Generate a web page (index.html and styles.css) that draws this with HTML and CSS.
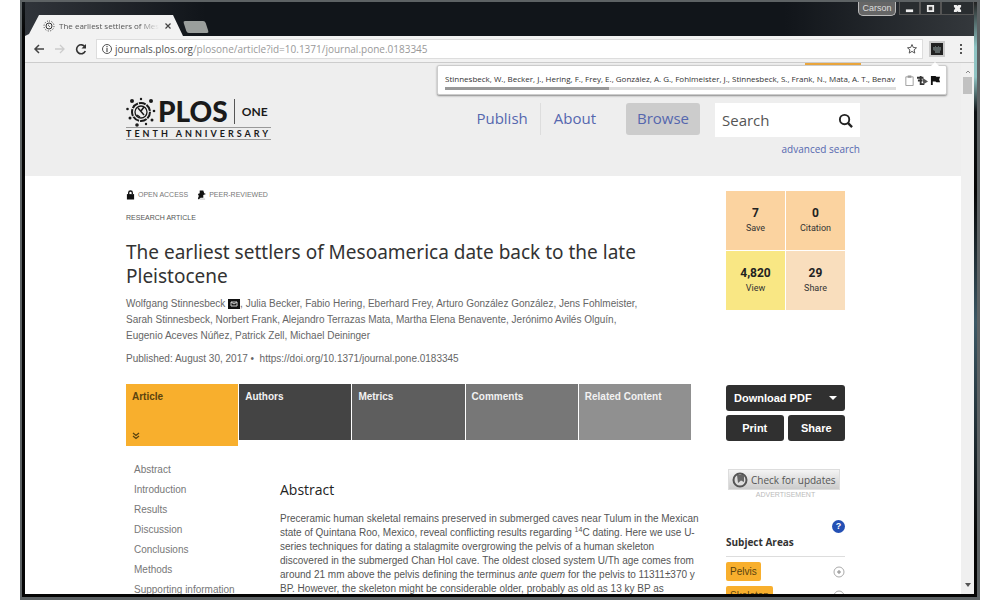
FILE: index.html
```html
<!DOCTYPE html>
<html lang="en">
<head>
<meta charset="utf-8">
<title>The earliest settlers of Mesoamerica</title>
<link rel="stylesheet" href="styles.css">
</head>
<body>
<div class="window">
  <div class="titlebar">
    <div class="tabs">
      <div class="tab">
        <svg class="favicon" viewBox="0 0 12 12"><g fill="none" stroke="#333"><circle cx="6" cy="6" r="3"/><path stroke-dasharray="1 1.6" d="M6 1a5 5 0 1 1 0 10a5 5 0 1 1 0-10M5 5l2 1-1 1"/></g></svg>
        <span class="tab-title">The earliest settlers of Mes</span>
        <button class="tab-close" aria-label="Close tab"><svg viewBox="0 0 8 8"><path d="M1.500 1.500l5 5M6.500 1.500l-5 5" stroke="#444" stroke-width="1.200"/></svg></button>
      </div>
      <button class="new-tab" aria-label="New tab"></button>
    </div>
    <div class="controls">
      <button class="user">Carson</button>
      <button class="control" aria-label="Minimize"><svg viewBox="0 0 10 10"><path d="M1 6h8v3H1z" fill="#eee"/></svg></button>
      <button class="control" aria-label="Maximize"><svg viewBox="0 0 10 10"><path d="M2 2h6v6H2z" fill="#444" stroke="#eee" stroke-width="2"/></svg></button>
      <button class="control close" aria-label="Close"><svg viewBox="0 0 10 10"><path d="M1 1h3l1 1 1-1h3v2L7.500 5 9 7v2H6L5 8 4 9H1V7l1.500-2L1 3z" fill="#eee"/></svg></button>
    </div>
  </div>

  <div class="toolbar">
    <button class="nav-button" aria-label="Back"><svg viewBox="0 0 12 12"><path d="M11 6H2M6 2L2 6l4 4" fill="none" stroke="#444" stroke-width="1.500"/></svg></button>
    <button class="nav-button" aria-label="Forward"><svg viewBox="0 0 12 12"><path d="M1 6h9M6 2l4 4-4 4" fill="none" stroke="#ccc" stroke-width="1.300"/></svg></button>
    <button class="nav-button" aria-label="Reload"><svg viewBox="0 0 12 12"><path d="M10 4A4.500 4.500 0 1 0 10.300 8" fill="none" stroke="#333" stroke-width="1.600"/><path d="M11 1v4.500H6.500z" fill="#333"/></svg></button>
    <div class="address">
      <svg class="info" viewBox="0 0 12 12"><circle cx="6" cy="6" r="4.500" fill="none" stroke="#555"/><path d="M6 5v4M6 3v1.200" stroke="#555" stroke-width="1.200"/></svg>
      <span class="url"><b>journals.plos.org</b>/plosone/article?id=10.1371/journal.pone.0183345</span>
      <button class="star" aria-label="Bookmark"><svg viewBox="0 0 12 12"><path d="M6 1.500l1.300 3 3.200.3-2.400 2.100.7 3.200L6 8.400l-2.800 1.700.7-3.200-2.400-2.100 3.200-.3z" fill="none" stroke="#555"/></svg></button>
    </div>
    <div class="extension">
      <button class="extension-button" aria-label="Citation helper"><svg viewBox="0 0 12 12"><path d="M0 0h12v12H0z" fill="#222"/><path d="M2 4h2V3h1v1h2V3h1v1h2v3L9 8v2H4V8L2 7z" fill="#5c6464"/></svg></button>
      <div class="bubble">
        <div class="citation">
          <div class="citation-text">Stinnesbeck, W., Becker, J., Hering, F., Frey, E., González, A. G., Fohlmeister, J., Stinnesbeck, S., Frank, N., Mata, A. T., Benav</div>
          <div class="track"><div class="thumb"></div></div>
        </div>
        <button class="tool" aria-label="Copy"><svg viewBox="0 0 12 12"><path d="M2 2h8v9.500H2z" fill="#fff" stroke="#999"/><path d="M4 .5h4V3H4z" fill="#999"/></svg></button>
        <button class="tool" aria-label="Share"><svg viewBox="0 0 12 12"><path d="M0 2h7v2H0zM1 5h5v2H1zM3 1h2v8h3v2H3z" fill="#333"/><path d="M6 3l6 4-5 3z" fill="#555"/></svg></button>
        <button class="tool" aria-label="Flag"><svg viewBox="0 0 12 12"><path d="M1 1h2v10H1zM3 1h3l1 1h4l-1 3 1 3H7L6 7H3z" fill="#111"/></svg></button>
      </div>
    </div>
    <button class="menu" aria-label="Menu"><svg viewBox="0 0 12 12"><path d="M5 1h2v2H5zM5 5h2v2H5zM5 9h2v2H5z" fill="#555"/></svg></button>
  </div>

  <div class="viewport">
    <div class="page">
      <header class="site-header">
        <div class="container header-row">
          <a class="logo" href="#">
            <span class="logo-top">
              <svg class="burst" viewBox="0 0 30 30"><g fill="none" stroke="#1a1a1a"><circle cx="15" cy="15" r="9" stroke-width="2" stroke-dasharray="7 1"/><circle cx="15" cy="15" r="6" stroke-width="1.300"/><path d="M12 11l6 7M18 10l-3 4M11 18l3 2" stroke-width="1.500"/></g><g fill="#1a1a1a"><circle cx="6" cy="4" r="2"/><circle cx="15" cy="2" r="1.200"/><circle cx="25" cy="4" r="2"/><circle cx="1.500" cy="12" r="1.300"/><circle cx="28" cy="14" r="1.300"/><circle cx="4" cy="21" r="1.500"/><circle cx="26" cy="23" r="1.500"/><circle cx="11" cy="28" r="1.800"/><circle cx="20" cy="27" r="1.200"/></g></svg>
              <span class="plos">PLOS</span><span class="one">ONE</span>
            </span>
            <span class="tenth">TENTH ANNIVERSARY</span>
          </a>
          <nav class="site-nav">
            <a href="#">Publish</a>
            <a class="about" href="#">About</a>
            <a class="browse" href="#">Browse</a>
          </nav>
          <form class="search">
            <div class="search-box">
              <input type="search" placeholder="Search" aria-label="Search">
              <button class="search-button" type="button" aria-label="Submit search"><svg viewBox="0 0 16 16"><circle cx="7" cy="7" r="5" fill="none" stroke="#222" stroke-width="2"/><path d="M10.500 10.500L15 15" stroke="#222" stroke-width="2.500"/></svg></button>
            </div>
            <a class="advanced" href="#">advanced search</a>
          </form>
        </div>
      </header>

      <div class="container columns">
        <main class="article">
          <div class="badges">
            <svg viewBox="0 0 10 10"><path d="M1 4h8v6H1z" fill="#111"/><path d="M3 5V2.500a2 2 0 0 1 4 0V4" fill="none" stroke="#111" stroke-width="1.500"/></svg>
            <span class="open">OPEN ACCESS</span>
            <svg viewBox="0 0 10 10"><path d="M3 0h4l1 3 2 1-3 1v3H4L2 10 1 9l1-3-1-2 2-1z" fill="#111"/><path d="M3 9.500h6" stroke="#bbb"/></svg>
            <span>PEER-REVIEWED</span>
          </div>
          <div class="kind">RESEARCH ARTICLE</div>
          <h1>The earliest settlers of Mesoamerica date back to the late Pleistocene</h1>
          <p class="authors">Wolfgang Stinnesbeck <svg class="mail" viewBox="0 0 12 10"><path d="M0 0h12v10H0z" fill="#111"/><path d="M3 3h6v4H3zM3 3l3 2 3-2" fill="none" stroke="#ccc"/></svg>, Julia Becker, Fabio Hering, Eberhard Frey, Arturo González González, Jens Fohlmeister,<br>Sarah Stinnesbeck, Norbert Frank, Alejandro Terrazas Mata, Martha Elena Benavente, Jerónimo Avilés Olguín,<br>Eugenio Aceves Núñez, Patrick Zell, Michael Deininger</p>
          <p class="published">Published: August 30, 2017 • &nbsp;<a href="#">https://doi.org/10.1371/journal.pone.0183345</a></p>
          <nav class="article-tabs">
            <a class="current" href="#">Article<svg viewBox="0 0 8 8"><path d="M1 1l3 2.500L7 1M1 4l3 2.500L7 4" fill="none" stroke="#5b430f" stroke-width="1.300"/></svg></a>
            <a class="t-authors" href="#">Authors</a>
            <a class="t-metrics" href="#">Metrics</a>
            <a class="t-comments" href="#">Comments</a>
            <a class="t-related" href="#">Related Content</a>
          </nav>
          <div class="body-row">
            <nav class="toc">
              <a href="#">Abstract</a>
              <a href="#">Introduction</a>
              <a href="#">Results</a>
              <a href="#">Discussion</a>
              <a href="#">Conclusions</a>
              <a href="#">Methods</a>
              <a href="#">Supporting information</a>
            </nav>
            <section class="abstract">
              <h2>Abstract</h2>
              <p>Preceramic human skeletal remains preserved in submerged caves near Tulum in the Mexican<br>state of Quintana Roo, Mexico, reveal conflicting results regarding <sup>14</sup>C dating. Here we use U-<br>series techniques for dating a stalagmite overgrowing the pelvis of a human skeleton<br>discovered in the submerged Chan Hol cave. The oldest closed system U/Th age comes from<br>around 21 mm above the pelvis defining the terminus <i>ante quem</i> for the pelvis to 11311±370 y<br>BP. However, the skeleton might be considerable older, probably as old as 13 ky BP as</p>
            </section>
          </div>
        </main>

        <aside class="sidebar">
          <div class="metrics">
            <a href="#"><b>7</b>Save</a>
            <a href="#"><b>0</b>Citation</a>
            <a class="view" href="#"><b>4,820</b>View</a>
            <a class="share" href="#"><b>29</b>Share</a>
          </div>
          <div class="actions">
            <button class="download">Download PDF <svg viewBox="0 0 8 4"><path d="M0 0h8L4 4z" fill="#fff"/></svg></button>
            <button>Print</button>
            <button>Share</button>
          </div>
          <button class="updates"><svg viewBox="0 0 16 16"><circle cx="8" cy="8" r="6.500" fill="#ddd" stroke="#555" stroke-width="2"/><path d="M5 3h7v7l-3-1.500L6 11z" fill="#666"/></svg>Check for updates</button>
          <div class="ad">ADVERTISEMENT</div>
          <button class="help" aria-label="Help">?</button>
          <h3>Subject Areas</h3>
          <ul class="subjects">
            <li><a href="#">Pelvis</a><svg viewBox="0 0 12 12"><circle cx="6" cy="6" r="5" fill="none" stroke="#aaa"/><path d="M6 4v4M4 6h4" stroke="#888"/></svg></li>
            <li><a href="#">Skeleton</a><svg viewBox="0 0 12 12"><circle cx="6" cy="6" r="5" fill="none" stroke="#aaa"/><path d="M6 4v4M4 6h4" stroke="#888"/></svg></li>
          </ul>
        </aside>
      </div>
    </div>
    <div class="scrollbar">
      <svg viewBox="0 0 8 8"><path d="M2 5l2-2 2 2" fill="none" stroke="#888"/></svg>
      <div class="scroll-thumb"></div>
      <svg class="down" viewBox="0 0 8 8"><path d="M1 2h6L4 6z" fill="#555"/></svg>
    </div>
  </div>
</div>
</body>
</html>
```
FILE: styles.css
```css
* { box-sizing: border-box; }
body { margin: 0; padding: 0 20px; background: #fff; font: 10px/14px "Liberation Sans", sans-serif; color: #666; }
a { color: inherit; text-decoration: none; }
button { margin: 0; padding: 0; border: 0; background: none; color: inherit; font: inherit; }
svg { display: block; flex: none; }
h1, h2, h3, p, ul { margin: 0; padding: 0; font-weight: normal; }

.window { display: flex; flex-direction: column; height: 100vh; overflow: hidden; padding: 0 3px 3px; border: solid #5d6264; border-width: 2px 3px 3px 2px; background: linear-gradient(#111519, #050505 30px) no-repeat 0 0 / 50% 100%, linear-gradient(#222, #8fc4c4 45px, #8fc4c4 75px, #0c1013 110px, #050505 190px, #3c5966 320px, #050505 90%); }

/* Browser frame */
.titlebar { display: flex; flex: none; justify-content: space-between; height: 34px; background: linear-gradient(90deg, #30343a, #11151a 180px, #11151a 80%, #34383c); }
.tabs { display: flex; align-items: flex-end; }
.tab { display: flex; align-items: center; width: 160px; height: 21px; padding: 0 12px 0 18px; background: #f2f2f2; clip-path: polygon(0 100%, 4px 90%, 14px 0, 148px 0, 158px 100%); }
.favicon { width: 12px; height: 12px; margin-right: 4px; }
.tab-title { flex: 1; overflow: hidden; font: 8px/14px "Open Sans", sans-serif; white-space: nowrap; color: #555; mask-image: linear-gradient(90deg, #000 80%, transparent 99%); }
.tab-close { margin: 0 1px 0 4px; }
.tab-close svg { width: 8px; height: 8px; }
.new-tab { width: 22px; height: 12px; margin-bottom: 3px; background: #9a9e9c; transform: skewX(18deg); border-radius: 2px; }
.controls { display: flex; align-items: flex-start; }
.user { width: 38px; height: 14px; margin-right: 3px; border: 1px solid #bbb; border-top: 0; border-radius: 0 0 5px 5px; background: #666; color: #ddd; font-size: 9px; line-height: 11px; }
.control { display: grid; place-items: center; width: 21px; height: 13px; border: 1px solid #555; border-top: 0; background: #292d30; }
.control.close { width: 33px; }
.control svg { width: 9px; height: 9px; }

.toolbar { display: flex; flex: none; align-items: center; height: 27px; padding: 0 7px 0 8px; border-bottom: 1px solid #ccc; background: #f2f2f2; }
.nav-button { margin-right: 9px; }
.nav-button svg { width: 12px; height: 12px; }
.address { display: flex; flex: 1; align-items: center; height: 20px; padding: 0 4px; border: 1px solid #ddd; background: #fff; }
.info { width: 12px; height: 12px; margin-right: 2px; }
.url { flex: 1; font: 10px/14px "Open Sans", sans-serif; color: #999; }
.url b { font-weight: normal; color: #555; }
.star svg, .menu svg { width: 12px; height: 12px; }
.extension { position: relative; margin: 0 10px 0 6px; }
.extension-button { display: grid; place-items: center; width: 16px; height: 16px; background: #ccc; }
.extension-button svg { width: 12px; height: 12px; }
.bubble { position: absolute; z-index: 2; top: 24px; right: -2px; display: flex; align-items: center; gap: 2px; width: 510px; height: 30px; padding: 4px 5px 4px 7px; border: 1px solid #ccc; border-radius: 2px; background: #fff; box-shadow: 0 1px 2px #888; }
.bubble::before { content: ""; position: absolute; top: -4px; right: 7px; border: 4px solid transparent; border-top: 0; border-bottom-color: #fff; }
.citation { flex: 1; min-width: 0; margin-right: 6px; }
.citation-text { overflow: hidden; font: 8px/16px "Open Sans", sans-serif; white-space: nowrap; color: #333; }
.track { height: 3px; background: #ddd; }
.thumb { width: 164px; height: 3px; background: #999; }
.tool svg { width: 11px; height: 11px; }

.viewport { display: flex; flex: 1; min-height: 0; background: #fff; }
.page { flex: 1; overflow: hidden; }
.scrollbar { display: flex; flex-direction: column; align-items: center; width: 13px; padding: 5px 2px; background: #f0f0f0; }
.scrollbar svg { width: 8px; height: 8px; }
.scroll-thumb { width: 9px; height: 17px; margin-top: 1px; background: #c1c1c1; }
.scrollbar .down { margin-top: auto; }

/* Site header */
.container { max-width: 734px; margin: 0 auto; }
.site-header { height: 113px; background: #eee; }
.header-row { display: flex; align-items: flex-start; }
.header-row::before { content: ""; position: absolute; z-index: 1; top: 63px; width: 56px; height: 2px; margin-left: 679px; background: #eba63c; }
.logo { margin: 33px auto 0 0; color: #1a1a1a; }
.logo-top { display: flex; align-items: center; height: 31px; }
.burst { width: 30px; height: 30px; }
.plos { padding: 0 6px 0 2px; border-right: 1px solid #555; font: 900 28px/25px Lato, sans-serif; }
.one { margin-left: 7px; font: bold 12px/14px Lato, sans-serif; }
.tenth { display: block; border: solid #999; border-width: 1px 0; font: bold 9px/11px Lato, sans-serif; letter-spacing: 3px; white-space: nowrap; }
.site-nav { display: flex; align-items: center; margin-top: 40px; font: 15px/30px "Open Sans", sans-serif; color: #5567ae; }
.site-nav a { padding-bottom: 2px; }
.site-nav .about { margin: 0 30px 0 12px; padding-left: 13px; border-left: 1px solid #ddd; }
.browse { width: 74px; border-radius: 3px; background: #ccc; text-align: center; }
.search { width: 145px; margin: 40px 0 0 15px; text-align: right; }
.search-box { display: flex; align-items: center; height: 34px; padding: 0 7px; background: #fff; }
.search input { flex: 1; min-width: 0; padding: 0; border: 0; font: 15px/20px "Open Sans", sans-serif; }
.search input::placeholder { color: #555; opacity: 1; }
.search-button svg { width: 15px; height: 15px; }
.advanced { display: block; margin-top: 4px; font: 10px/16px "Open Sans", sans-serif; color: #5567ae; }

/* Article */
.columns { display: flex; padding: 15px 15px 0 0; }
.article { flex: 1; min-width: 0; margin-right: 35px; }
.badges { display: flex; align-items: center; height: 8px; font-size: 7px; color: #777; }
.badges svg { width: 9px; height: 10px; margin-right: 3px; }
.open { margin-right: 9px; }
.kind { margin-top: 13px; font-size: 7px; line-height: 12px; color: #555; }
h1 { margin-top: 16px; font: 19px/24px "Noto Sans", sans-serif; color: #333; }
.authors { margin-top: 8px; line-height: 16px; white-space: nowrap; }
.mail { display: inline-block; width: 12px; height: 10px; vertical-align: -2px; }
.published { margin-top: 6px; line-height: 17px; }
.article-tabs { display: grid; grid-template-columns: repeat(5, 1fr); grid-template-rows: 56px; gap: 1px; margin: 17px 0 6px; font-weight: bold; color: #f2f2f2; }
.article-tabs a { padding: 6px; }
.article-tabs .current { display: flex; flex-direction: column; justify-content: space-between; height: 62px; background: #f8af2d; color: #5b430f; }
.current svg { width: 8px; height: 8px; }
.t-authors { background: #444; }
.t-metrics { background: #5e5e5e; }
.t-comments { background: #777; }
.t-related { background: #909090; }
.body-row { display: flex; }
.toc { display: flex; flex: none; flex-direction: column; width: 154px; padding: 14px 0 0 8px; line-height: 20px; color: #777; }
.abstract { flex: 1; min-width: 0; white-space: nowrap; }
h2 { margin-top: 34px; font: 14px/20px "Open Sans", sans-serif; color: #222; }
.abstract p { margin-top: 12px; line-height: 14px; color: #555; }
sup { font-size: 7px; line-height: 0; }

/* Sidebar */
.sidebar { width: 119px; }
.metrics { display: grid; grid-template-columns: 1fr 1fr; gap: 1px; }
.metrics a { display: flex; flex-direction: column; justify-content: center; height: 59px; background: #fbd3a0; font: 9px/14px Roboto, sans-serif; text-align: center; color: #333; }
.metrics b { font-size: 12px; line-height: 15px; color: #222; }
.metrics .view { background: #f9e784; }
.metrics .share { background: #f9debd; }
.actions { display: grid; grid-template-columns: 1fr 1fr; gap: 4px; margin-top: 75px; }
.actions button { height: 26px; border-radius: 3px; background: #303030; color: #fff; font: bold 11px/14px "Liberation Sans", sans-serif; }
.actions .download { display: flex; grid-column: 1 / 3; align-items: center; justify-content: space-between; padding: 0 8px; }
.download svg { width: 8px; height: 4px; }
.updates { display: flex; align-items: center; gap: 3px; height: 21px; margin: 28px 0 0 2px; padding: 0 3px; border: 1px solid #ddd; background: linear-gradient(#f4f4f4, #ccc); font: 10px/14px "Open Sans", sans-serif; white-space: nowrap; color: #555; }
.updates svg { width: 16px; height: 16px; }
.ad { font-size: 7px; line-height: 10px; text-align: center; color: #bbb; }
.help { display: block; width: 13px; height: 13px; margin: 20px 0 0 auto; border-radius: 50%; background: #2450b4; color: #fff; font-size: 9px; font-weight: bold; line-height: 13px; }
h3 { margin-top: 1px; padding-bottom: 6px; border-bottom: 1px solid #ddd; font: bold 10px/16px "Open Sans", sans-serif; color: #333; }
.subjects { list-style: none; }
.subjects li { display: flex; align-items: center; justify-content: space-between; margin-top: 5px; }
.subjects a { padding: 0 4px; border-radius: 2px; background: #f8af2d; line-height: 19px; color: #5b430f; }
.subjects svg { width: 12px; height: 12px; }
```
